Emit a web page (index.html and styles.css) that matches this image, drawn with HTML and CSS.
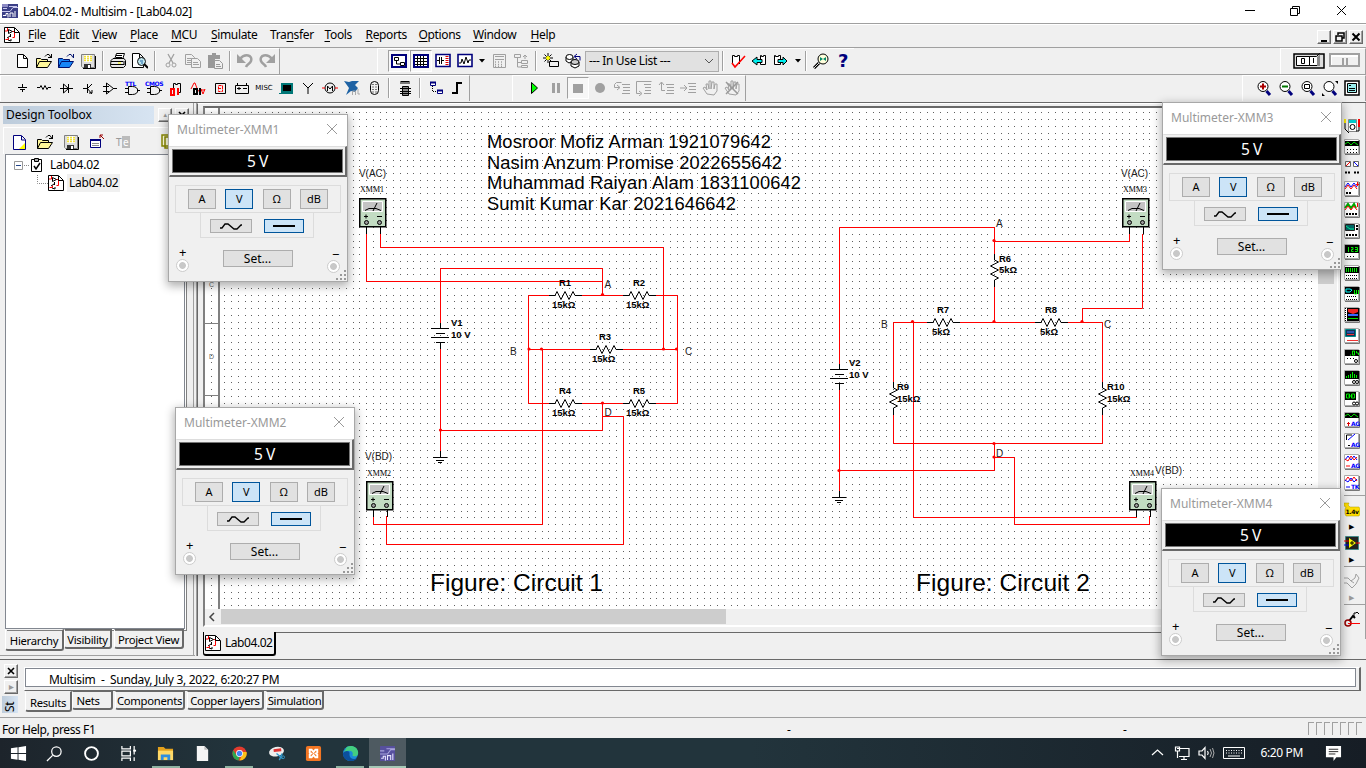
FILE: index.html
```html
<!DOCTYPE html>
<html lang="en">
<head>
<meta charset="utf-8">
<title>Lab04.02 - Multisim - [Lab04.02]</title>
<link rel="stylesheet" href="styles.css">
</head>
<body>
<svg class="defs" width="0" height="0">
<defs>
<pattern id="gridL" x="224" y="112" width="27" height="27" patternUnits="userSpaceOnUse"><path class="dots" d="M0 .5h1M7 .5h1M14 .5h1M21 .5h1M0 7.5h1M7 7.5h1M14 7.5h1M21 7.5h1M0 14.5h1M7 14.5h1M14 14.5h1M21 14.5h1M0 21.5h1M7 21.5h1M14 21.5h1M21 21.5h1"/></pattern>
<pattern id="gridR" x="1203" y="112" width="27" height="27" patternUnits="userSpaceOnUse"><path class="dots" d="M0 .5h1M7 .5h1M14 .5h1M21 .5h1M0 7.5h1M7 7.5h1M14 7.5h1M21 7.5h1M0 14.5h1M7 14.5h1M14 14.5h1M21 14.5h1M0 21.5h1M7 21.5h1M14 21.5h1M21 21.5h1"/></pattern>
<symbol id="logo" viewBox="0 0 16 16"><path fill="#3b3f86" d="M0 1h16v14H0z"/><path fill="#8d8bc4" d="M0 1h6v3H0z"/><path stroke="#c9c8ec" fill="none" d="M0 8.5h8l3-4h5M7 3.500h8M1 5.500h4"/><path stroke="#fff" fill="none" d="M1 12.500h3v-2h2v4M8 14v-4h3v4M13 14V8"/></symbol>
<symbol id="doc" viewBox="0 0 16 16"><path fill="#fff" stroke="#000" d="M.5.5h10l5 5v10H.5z"/><path fill="none" stroke="#f00" d="M3.500 1v3H1M8.500 4.500h2v6h-2M1.500 12.500h3v-2"/><path fill="none" stroke="#000" d="M10.500 1v4.500H15M4.500 2.500l4 2-4 2zM6.500 7v3M3 11l3-2M4 13l3 1v-2"/></symbol>
<symbol id="new" viewBox="0 0 16 16"><path fill="#fff" stroke="#000" d="M3.500 1.500h6l4 4v9h-10zM9.500 2v3.500H13"/></symbol>
<symbol id="newy" viewBox="0 0 16 16"><path fill="#fff" stroke="#00007c" d="M2.500 1.500h8l4 4v10h-12zM10.500 2v4H14"/><path fill="#ff0" d="M14 9v6H8z"/></symbol>
<symbol id="open" viewBox="0 0 16 16"><path fill="#fff799" stroke="#000" d="M.5 14.500v-9h4l1 1h6v2M.5 14.500l3-6h12l-4 6z"/><path fill="none" stroke="#000" d="M9 3.500l2-2h2l2 3M15.500 1v4M12 4.500h3"/></symbol>
<symbol id="openb" viewBox="0 0 16 16"><path fill="#1686f8" stroke="#00106c" d="M.5 14.500v-9h4l1 1h6v2M.5 14.500l3-6h12l-4 6z"/><path fill="none" stroke="#00106c" d="M9 3.500l2-2h2l2 3M15.500 1v4"/></symbol>
<symbol id="save" viewBox="0 0 16 16"><path fill="#ddd" stroke="#808080" d="M1.500 1.500h13v13h-12l-1-1z"/><path fill="#fff" d="M4 2h8v7H4z"/><path stroke="#f2e23c" stroke-width="1.500" d="M4 3.500h8M4 5.500h8M4 7.500h8" stroke-dasharray="2 1"/><path fill="#333" d="M4 11h7v4H4z"/><path fill="#fff" d="M8 12h2v3H8z"/><path stroke="#000" d="M15.500 3v12.500H3" fill="none"/></symbol>
<symbol id="print" viewBox="0 0 16 16"><path fill="#fff" stroke="#000" d="M4.500 6.500l2-6h8l-2 6z"/><path fill="#e8e8e8" stroke="#000" d="M1 7.500l2-2h11l1.500 2v5l-2 2h-12l-1-2z"/><path stroke="#000" d="M6 2.500h6M6 4.500h6M1 8.500h12M1 11.500h13M3 14.500h10M14 8v4"/><path stroke="#ff0" d="M8 10h3"/></symbol>
<symbol id="preview" viewBox="0 0 16 16"><path fill="#fff" stroke="#000" d="M.5.5h7l4 4v10H.5zM7.500 1v4H11"/><circle cx="9.500" cy="8.500" r="4" fill="#bde5ee" stroke="#111"/><path stroke="#26a" stroke-width="1" d="M8 8h3M9 10h2"/><path stroke="#000" stroke-width="2" d="M12 11l4 4"/></symbol>
<symbol id="cut" viewBox="0 0 16 16"><path fill="none" stroke="#a0a0a0" stroke-width="1.300" d="M5 1l5 9M11 1L6 10"/><circle cx="5" cy="12" r="2" class="gl"/><circle cx="11" cy="12" r="2" class="gl"/></symbol>
<symbol id="copy" viewBox="0 0 16 16"><path class="gl" d="M.5 1.500h6l3 3v7h-9zM2 5.500h5M2 7.500h5M2 9.500h4"/><path fill="#f0f0f0" stroke="#a0a0a0" d="M6.500 5.500h6l3 3v6h-9zM8 9.500h5M8 11.500h6"/></symbol>
<symbol id="paste" viewBox="0 0 16 16"><path fill="#999" d="M1 2h4V0h4v2h4v4h-5v9H1z"/><path fill="#f0f0f0" stroke="#999" d="M7.500 7.500h5l3 3v5h-8zM9 11.500h4M9 13.500h5"/></symbol>
<symbol id="undo" viewBox="0 0 16 16"><path fill="none" stroke="#a0a0a0" stroke-width="2.500" d="M3 6c5-6 13-4 11 2-1 3-4 3-5 6"/><path fill="#a0a0a0" d="M0 1v9h9z"/></symbol>
<symbol id="redo" viewBox="0 0 16 16"><path fill="none" stroke="#a0a0a0" stroke-width="2.500" d="M13 6C8 0 0 2 2 8c1 3 4 3 5 6"/><path fill="#a0a0a0" d="M16 1v9H7z"/></symbol>
<symbol id="win1" viewBox="0 0 16 16"><path fill="#fff" stroke="#00007c" stroke-width="2" d="M1 2h14v12H1z"/><path fill="none" stroke="#000" d="M3.500 4.500h4v3h-4zM9.500 9.500h4v3h-4zM5.500 8v3H9"/></symbol>
<symbol id="win2" viewBox="0 0 16 16"><path fill="#fff" stroke="#00007c" stroke-width="2" d="M1 2h14v12H1z"/><path stroke="#000" d="M2 5.500h12M2 8.500h12M2 11.500h12M4.500 3v10M7.500 3v10M10.500 3v10"/></symbol>
<symbol id="win3" viewBox="0 0 16 16"><path fill="#fff" stroke="#00007c" stroke-width="1.600" d="M1 1.500h14v12H1z"/><path stroke="#000" d="M2 7.500h2M4.500 4v7M6.500 4v7M7 7.500h2"/><path stroke="#d00" stroke-width="3" stroke-dasharray="1 1" d="M12 3v10"/></symbol>
<symbol id="win4" viewBox="0 0 16 16"><path fill="#fff" stroke="#00007c" stroke-width="1.600" d="M1 1.500h14v12H1z"/><path stroke="#000" fill="none" d="M2 10h2l1-4 2 5 2-7 2 6 1-3h2"/></symbol>
<symbol id="down" viewBox="0 0 8 8"><path d="M1 2h6L4 5.500z"/></symbol>
<symbol id="calc" viewBox="0 0 16 16"><path class="gl" d="M2.500 1.500h12v13h-12zM4 3.500h9M4 6.500h9"/><path stroke="#a0a0a0" stroke-dasharray="1 2" stroke-width="1.500" d="M4 9h9M4 11.500h9M4 13.500h9"/></symbol>
<symbol id="hier" viewBox="0 0 16 16"><path class="gl" d="M1.500 1.500h6v3h-6zM8.500 7.500h6v3h-6zM8.500 12.500h6v2h-6zM4.500 5v9H8M5 9.500h3M12 6V2M10 4l2-2 2 2"/></symbol>
<symbol id="star" viewBox="0 0 16 16"><path fill="none" stroke="#000" d="M6.500 8.500h9v5h-9z"/><path stroke="#000" d="M5 0v10M0 5h10M1.500 1.500l7 7M8.500 1.500l-7 7"/><circle cx="5" cy="5" r="2" fill="#ff0"/></symbol>
<symbol id="db" viewBox="0 0 16 16"><path fill="#fff" stroke="#000" d="M1 4v4l3 2 4-2V4M6 9v4l4 2 4-2V9"/><ellipse cx="4.500" cy="4" rx="3.500" ry="2.500" fill="#fff" stroke="#000"/><ellipse cx="10" cy="9" rx="4" ry="2.500" fill="#ccc" stroke="#000"/><path stroke="#00007c" fill="none" d="M10 3.500h5v4M12 1l-3 2.500L12 6"/></symbol>
<symbol id="check" viewBox="0 0 16 16"><path fill="#fff" stroke="#000" d="M2.500 11V2.500h2v1h3v-1h2V11"/><path fill="none" stroke="#f00" stroke-width="1.600" d="M2 10l3 4L15 3"/></symbol>
<symbol id="al" viewBox="0 0 16 16"><path fill="#fff" stroke="#000" d="M8.500 2.500h1v1h2v-1h2v9h-5z"/><path fill="#0ee" stroke="#000" d="M0 8l5-4v2.500h5v3H5V12z"/></symbol>
<symbol id="ar" viewBox="0 0 16 16"><path fill="#fff" stroke="#000" d="M.5 2.500h1v1h3v-1h2v9h-6z"/><path fill="#0ee" stroke="#000" d="M13 8L9 4v2.500H4v3h5V12z"/></symbol>
<symbol id="find" viewBox="0 0 16 16"><circle cx="10" cy="6" r="5" fill="#ffd" stroke="#000"/><path fill="#086" d="M7 4l3 2 3-2v4l-3-2-3 2z"/><path stroke="#000" stroke-width="3" d="M6 10l-5 5"/><path stroke="#ddd" d="M6 10l-5 5"/></symbol>
<symbol id="gndi" viewBox="0 0 16 16"><path stroke="#000" d="M8.500 4v3M4 7.500h9M6 9.500h5M8.500 10v2"/></symbol>
<symbol id="resi" viewBox="0 0 16 16"><path fill="none" stroke="#000" d="M1 8h3l1-2 2 4 2-4 2 4 1-2h3" transform="translate(0 -.5)"/></symbol>
<symbol id="dio" viewBox="0 0 16 16"><path fill="none" stroke="#000" d="M2 8.500h13M5.500 4v9l5-4.500zM10.500 4v9"/></symbol>
<symbol id="tran" viewBox="0 0 16 16"><path fill="none" stroke="#000" d="M3 8.500h4M7.500 4v9M7 9l5-5M7 8l5 6M9 13h3v-3"/></symbol>
<symbol id="opa" viewBox="0 0 16 16"><path fill="none" stroke="#000" d="M4.500 3v11l7-5.500zM1 6.500h6M1 11.500h6M11 8.500h4"/></symbol>
<symbol id="gate" viewBox="0 0 16 16"><path fill="none" stroke="#000" d="M4.500 6.500h4c7 0 7 8 0 8h-4zM1 8.500h3M1 12.500h3M13 10.500h3"/></symbol>
<symbol id="mcui" viewBox="0 0 16 16"><path fill="#888" stroke="#000" d="M5.500 6.500h6v9h-6z"/><path stroke="#000" d="M3 8.500h11M3 11.500h11M3 13.500h11M4 1v3M6 1v3M8 1v3M10 1v3M12 1v3M4 1.500h8"/></symbol>
<symbol id="step1" viewBox="0 0 16 16"><path class="gl" d="M8 4.500h8M9 7.500h7M9 10.500h7M8 13.500h8M7.500 2.500h-5l-2 2v3h5M3 5l3 2.500L3 10"/></symbol>
<symbol id="step2" viewBox="0 0 16 16"><path class="gl" d="M8 4.500h7M9 7.500h6M9 10.500h6M8 13.500h7M15.500 1.500H.5v12h4M3 11l3 2.500L3 16"/></symbol>
<symbol id="step3" viewBox="0 0 16 16"><path class="gl" d="M8 4.500h8M9 7.500h7M9 10.500h7M8 13.500h8M7 10.500H3.500v-8M1 5l2.500-3L6 5"/></symbol>
<symbol id="step4" viewBox="0 0 16 16"><path class="gl" d="M8 3.500h8M9 6.500h7M9 9.500h7M8 12.500h8M0 8h6M4 5l3 3-3 3"/></symbol>
<symbol id="hand" viewBox="0 0 16 16"><path class="gl" d="M5 14L1 8l2-1 2 3-1-6h2l1 5V1h2v8l1-7h2v7l1-5h2v7l-3 4z"/></symbol>
<symbol id="mag" viewBox="0 0 16 16"><circle cx="7" cy="6.500" r="5" fill="#fff" stroke="#000"/><path stroke="#00007c" stroke-width="3" d="M10.500 11l3.500 4"/></symbol>
<symbol id="zig" viewBox="0 0 33 10"><path class="k" d="M0 5.500h6l2-4 4 8 4-8 4 8 4-8 2 4h7"/></symbol>
<symbol id="meter" viewBox="0 0 28 37"><path class="k" d="M7.500 28v8M21.500 28v8"/><path fill="#c3dcc3" stroke="#000" stroke-width="1.500" d="M.75.75h26v28h-26z"/><path fill="#c4c4c4" stroke="#fff" d="M3.500 3.500h20v10h-20z"/><path class="k" d="M6 12.500l4-2h7l5 2M14 13l4-8M5 18.500h4M7 16.500v4M18 18.500h5"/><circle cx="7.500" cy="24.500" r="2" fill="#999" stroke="#000"/><circle cx="20.500" cy="24.500" r="2" fill="#999" stroke="#000"/></symbol>
<symbol id="batt" viewBox="0 0 20 26"><path class="k" d="M10.500 0v5M1 5.500h18M6 10.500h9M1 14.500h18M6 19.500h9M10.500 19v7"/></symbol>
<symbol id="gnd" viewBox="0 0 16 12"><path class="k" d="M8.500 0v6M1 6.500h14M4 9.500h8M6 11.500h4"/></symbol>
<symbol id="sine" viewBox="0 0 22 9"><path fill="none" stroke="#000" stroke-width="1.300" d="M0 6h2l3-4h3l6 5h3l4-4h1"/></symbol>
<symbol id="x" viewBox="0 0 10 10"><path fill="none" stroke="currentColor" d="M0 0l10 10M10 0L0 10"/></symbol>
<symbol id="ibox" viewBox="0 0 16 16"><path fill="#fff" stroke="#aaa" d="M.5.5h14v14H.5z"/><path stroke="#777" d="M15.500 1v14.500H1" fill="none"/></symbol>
</defs></svg>

<header class="title"><svg class="i16"><use href="#logo"/></svg><span>Lab04.02 - Multisim - [Lab04.02]</span>
<svg class="winbtns" viewBox="0 0 110 16"><path fill="none" stroke="#000" d="M0 7.500h10M45.500 5.500h7v7h-7zM47.500 5.500v-2h7v7h-2M92 3l9 9M101 3l-9 9"/></svg></header>

<nav class="menu"><svg class="i16"><use href="#doc"/></svg>
<span class="mi w31"><u>F</u>ile</span><span class="mi w33"><u>E</u>dit</span><span class="mi w38"><u>V</u>iew</span><span class="mi w41"><u>P</u>lace</span><span class="mi w40"><u>M</u>CU</span><span class="mi w59"><u>S</u>imulate</span><span class="mi w55">Tra<u>n</u>sfer</span><span class="mi w41"><u>T</u>ools</span><span class="mi w53"><u>R</u>eports</span><span class="mi w55"><u>O</u>ptions</span><span class="mi w57"><u>W</u>indow</span><span class="mi w31"><u>H</u>elp</span>
<div class="mdibtns"><b class="raised"><svg viewBox="0 0 12 12"><path stroke="#000" stroke-width="2" d="M3 10h6"/></svg></b><b class="raised"><svg viewBox="0 0 12 12"><path fill="none" stroke="#000" stroke-width="1.500" d="M4 4V2h6v5H8M2 5h6v5H2z"/></svg></b><b class="raised"><svg viewBox="0 0 12 12"><path stroke="#000" stroke-width="2" d="M2.500 2.500l7 7M9.500 2.500l-7 7"/></svg></b></div></nav>

<div class="bar">
<div class="seg s1"><i class="c"><svg><use href="#new"/></svg></i><i class="c"><svg><use href="#open"/></svg></i><i class="c"><svg><use href="#openb"/></svg></i><i class="c"><svg><use href="#save"/></svg></i><i class="sep"></i><i class="c"><svg><use href="#print"/></svg></i><i class="c"><svg><use href="#preview"/></svg></i><i class="sep wide"></i><i class="c"><svg><use href="#cut"/></svg></i><i class="c"><svg><use href="#copy"/></svg></i><i class="c"><svg><use href="#paste"/></svg></i><i class="sep"></i><i class="c"><svg><use href="#undo"/></svg></i><i class="c"><svg><use href="#redo"/></svg></i></div>
<div class="seg s2"><i class="c on"><svg><use href="#win1"/></svg></i><i class="c on"><svg><use href="#win2"/></svg></i><i class="c"><svg><use href="#win3"/></svg></i><i class="c"><svg><use href="#win4"/></svg></i><i class="arr"><svg><use href="#down"/></svg></i><i class="c"><svg><use href="#calc"/></svg></i><i class="c"><svg><use href="#hier"/></svg></i><i class="sep"></i><i class="c"><svg><use href="#star"/></svg></i><i class="c"><svg><use href="#db"/></svg></i>
<div class="combo"><span>--- In Use List ---</span><svg viewBox="0 0 10 6"><path fill="none" stroke="#555" d="M1 1l4 4 4-4"/></svg></div>
<i class="sep"></i><i class="c"><svg><use href="#check"/></svg></i><i class="c"><svg><use href="#al"/></svg></i><i class="c"><svg><use href="#ar"/></svg></i><i class="arr n"><svg><use href="#down"/></svg></i><i class="sep"></i><i class="c"><svg><use href="#find"/></svg></i><i class="c q">?</i></div>
<div class="seg s3"><svg class="sw" viewBox="0 0 67 16"><path fill="#ddd" stroke="#000" stroke-width="1.500" d="M1 1h30v14H1z"/><path fill="#fff" stroke="#000" d="M3.500 3.500h13v9h-13zM16.500 3.500h7l3-3v12h-10z"/><path fill="#888" d="M24 4l3-3v12h-3z"/><path fill="none" stroke="#000" d="M8.500 5.500h3v5h-3zM20.500 5v5"/><path fill="#fff" stroke="#a0a0a0" stroke-width="2" d="M37 1h29v12H37z"/><path fill="#f0f0f0" d="M39 4h26v8H39z"/><path stroke="#a0a0a0" stroke-width="2" d="M50 5v7M54 5v7"/></svg></div>
</div>

<div class="bar b2">
<div class="seg r1"><i class="c"><svg><use href="#gndi"/></svg></i><i class="c"><svg><use href="#resi"/></svg></i><i class="c"><svg><use href="#dio"/></svg></i><i class="c"><svg><use href="#tran"/></svg></i><i class="c"><svg><use href="#opa"/></svg></i><i class="c"><svg><use href="#gate"/><text x="1" y="6" class="tiny blue">TTL</text></svg></i><i class="c"><svg><use href="#gate"/><text x="-1" y="6" class="tiny blue">CMOS</text></svg></i><i class="c"><svg viewBox="0 0 16 16"><path fill="none" stroke="#000" d="M5.500 8V3.500h2v1h2v-1h3v9H9"/><path fill="none" stroke="#f00" stroke-width="2" d="M3 9h3v6H3zM10 8v7"/></svg></i><i class="c"><svg viewBox="0 0 16 16"><path fill="none" stroke="#f00" d="M1 9l3-6h1l3 8 3-1h4M11 9l2 5 2-5"/><path fill="none" stroke="#000" stroke-width="2" d="M4 9h3v5H4zM10 8v7"/></svg></i><i class="c"><svg viewBox="0 0 16 16"><path fill="none" stroke="#000" d="M3.500 3.500h10v10h-10z"/><path fill="none" stroke="#f00" stroke-dasharray="3 1" d="M6.500 5.500h4v6h-4zM6 8.500h5"/></svg></i><i class="c"><svg viewBox="0 0 16 16"><path fill="none" stroke="#000" d="M1.500 5.500h13v8h-13zM3.500 3v2M12.500 3v2M3 8.500h4M5 7v3M9 8.500h4"/></svg></i><i class="c"><span class="misc">MISC</span></i><i class="c"><svg viewBox="0 0 16 16"><path fill="#077" d="M3 3h12v10H3zM1 13h14v1H1z"/><path d="M5 5h8v6H5z"/></svg></i><i class="c"><svg viewBox="0 0 16 16"><path fill="none" stroke="#000" d="M8 14V8L3 3M8 8l5-5"/></svg></i><i class="c"><svg viewBox="0 0 16 16"><circle cx="8" cy="8" r="5" fill="none" stroke="#000"/><path fill="none" stroke="#000" d="M5.500 11V6L8 9l2.500-3v5"/><path stroke="#f00" d="M0 8h3M13 8h3"/></svg></i><i class="c"><svg viewBox="0 0 16 16"><path fill="#1d62a4" d="M0 1l5 1 3-1h7l-4 4 3 3-3 4-4-1-5 4 3-7z"/><path stroke="#aaa" fill="none" d="M8.500 15v-4h3v4M14 9v5h2"/></svg></i><i class="c"><svg viewBox="0 0 16 16"><rect x="4.500" y="1.500" width="8" height="13" rx="4" fill="none" stroke="#000"/><path stroke="#000" stroke-dasharray="1 1.500" d="M7 4v9M10 4v9"/></svg></i><i class="sep"></i><i class="c"><svg><use href="#mcui"/></svg></i><i class="sep"></i><i class="c"><svg viewBox="0 0 16 16"><path fill="#fff" stroke="#00007c" d="M2.500 2.500h5v3h-5zM9.500 10.500h5v3h-5z"/><path stroke="#00007c" stroke-width="2" d="M2 2.500h6M9 10.500h6"/><path fill="none" stroke="#000" stroke-dasharray="1 1" d="M4.500 6v5.500H9"/></svg></i><i class="c"><svg viewBox="0 0 16 16"><path fill="none" stroke="#000" stroke-width="2" d="M2 13h5V3h5"/></svg></i></div>
<div class="seg r2"><i class="c"><svg viewBox="0 0 16 16"><path fill="#0f0" stroke="#000" d="M5.500 2.500v11l6-5.500z"/></svg></i><i class="c"><svg viewBox="0 0 16 16"><path fill="#a0a0a0" d="M4 3h3v10H4zM9 3h3v10H9z"/></svg></i><i class="c on"><svg viewBox="0 0 16 16"><path fill="#a0a0a0" d="M3 4h10v9H3z"/></svg></i><i class="c"><svg viewBox="0 0 16 16"><circle cx="8" cy="8" r="5" fill="#a0a0a0"/></svg></i><i class="c"><svg><use href="#step1"/></svg></i><i class="c"><svg><use href="#step2"/></svg></i><i class="c"><svg><use href="#step3"/></svg></i><i class="c"><svg><use href="#step4"/></svg></i><i class="c"><svg><use href="#hand"/></svg></i><i class="c"><svg viewBox="0 0 16 16"><use href="#hand"/><path stroke="#999" stroke-width="1.500" d="M2 2l12 12M14 2L2 14"/></svg></i></div>
<div class="seg r3"><i class="c"><svg viewBox="0 0 16 16"><use href="#mag"/><path stroke="#a00" stroke-width="2" d="M4 6.500h6M7 3.500v6"/></svg></i><i class="c"><svg viewBox="0 0 16 16"><use href="#mag"/><path stroke="#070" stroke-width="2" d="M4 6.500h6"/></svg></i><i class="c"><svg viewBox="0 0 16 16"><use href="#mag"/><path fill="none" stroke="#000" d="M4.500 4.500h5v4h-5z"/></svg></i><i class="c"><svg viewBox="0 0 16 16"><use href="#mag"/><path fill="#000" d="M13 1h3v3zM0 13v3h3z"/></svg></i><i class="c"><svg viewBox="0 0 16 16"><path fill="#fff" stroke="#000" stroke-width="1.500" d="M1 1h14v14H1z"/><path fill="#9ee" stroke="#000" d="M3.500 3.500h9v9h-9z"/><path stroke="#000" d="M5 5.500h2M5 8.500h6M5 10.500h6"/></svg></i></div>
</div>

<main class="work">
<aside class="toolbox">
 <div class="tbhead"><span>Design Toolbox</span><b class="raised up">▲</b><b class="raised"><svg viewBox="0 0 12 12"><path stroke="#000" stroke-width="1.600" d="M3 3l6 6M9 3l-6 6"/></svg></b></div>
 <div class="tbicons"><svg><use href="#newy"/></svg><svg><use href="#open"/></svg><svg><use href="#save"/></svg><svg viewBox="0 0 16 16"><path fill="#fff" stroke="#00007c" d="M1.500 5.500h10v8h-10z"/><path stroke="#00007c" stroke-width="2" d="M1 6h11"/><path stroke="#888" d="M3 9.500h7M3 11.500h7"/><path fill="none" stroke="#900" d="M15 5l-4-4M11 4V1h3"/></svg><svg viewBox="0 0 16 16"><path fill="#bbb" d="M7 2h8v12H7z"/><text x="1" y="12" class="te">T</text><text x="8" y="12" class="te e">e</text></svg><svg class="last" viewBox="0 0 16 16"><path fill="#ffd" stroke="#880" stroke-width="1.500" d="M1 1h9v11H1zM4 3h9v11H4z"/></svg></div>
 <div class="tree">
  <div class="trow"><svg class="conn" viewBox="0 0 26 16"><path fill="#fff" stroke="#999" d="M.5 4.500h8v8h-8z"/><path stroke="#248" d="M2 8.500h5"/><path stroke="#888" stroke-dasharray="1 1" d="M10 8.500h6"/></svg><svg class="clip" viewBox="0 0 12 14"><path fill="#fff" stroke="#000" d="M.5 1.500h10v12H.500z"/><path fill="#aaa" stroke="#000" d="M3.500.5h4v3h-4z"/><path fill="none" stroke="#000" stroke-width="1.500" d="M3 8l2 3 4-6"/></svg><span>Lab04.02</span></div>
  <div class="trow two"><svg class="elbow" viewBox="0 0 11 16"><path fill="none" stroke="#888" stroke-dasharray="1 1" d="M.5 0v8.500H11"/></svg><svg class="i16"><use href="#doc"/></svg><span class="sel">Lab04.02</span></div>
 </div>
 <div class="tabs t1"><span class="tab act">Hierarchy</span><span class="tab">Visibility</span><span class="tab">Project View</span></div>
</aside>

<section class="mdi">
 <div class="view">
 <svg class="sheet" viewBox="205 108 1113 501">
 <rect x="205" y="108" width="550" height="498" fill="url(#gridL)"/><rect x="755" y="108" width="558" height="498" fill="url(#gridR)"/>
 <path fill="#fff" d="M212 108h6v501h-6z"/>
 <path fill="#808080" d="M218 108h2v501h-2z"/><path stroke="#808080" d="M205 179.500h13M205 251.500h13M205 323.500h13M205 395.500h13M205 467.500h13M205 539.500h13"/>
 <g class="rul"><text x="209" y="287">C</text><text x="209" y="359">D</text><text x="209" y="575">G</text></g>
 <g class="r">
 <path d="M366.500 234v47.500H603M380.500 234v13.500H663.500V349M440.500 323V268.500H602.500V295M440.500 349V452M549 295.500H528.500V403.500H549M582 295.500H623M656 295.500H677.500V403.500H656M582 403.500H623M528.500 349.500H590M623 349.500H677.500M542.500 349V524.500H373.500V516M602.500 403V430.500H440.500M602.500 416.500H623.500V544.500H386.500V516"/>
 <path d="M839.500 365V227.500H994.500V254M994.500 241.500H1129.500V234M1142.500 234V308.500H1082.500V322M994.500 287V322.500M928 322.500H893.500V382M960 322.500H1035M1068 322.500H1102.500V382M893.500 415V443.500H1102.500V415M994.500 443V470.500H839.500M839.500 389V491M994.500 457.500H1014.500V524.500H1149.500V516M913.500 322V517.500H1136.500V516"/>
 </g>
 <g class="node"><circle cx="602.500" cy="294.500" r="1.600"/><circle cx="529" cy="349" r="1.600"/><circle cx="541.500" cy="349" r="1.600"/><circle cx="663.500" cy="349" r="1.600"/><circle cx="676.500" cy="349" r="1.600"/><circle cx="602.500" cy="403" r="1.600"/><circle cx="440.500" cy="430" r="1.600"/><circle cx="994" cy="240.500" r="1.600"/><circle cx="994" cy="321.500" r="1.600"/><circle cx="912.500" cy="321.500" r="1.600"/><circle cx="1082" cy="321.500" r="1.600"/><circle cx="994" cy="443.500" r="1.600"/><circle cx="994" cy="457" r="1.600"/><circle cx="839" cy="470.500" r="1.600"/></g>
 <use href="#zig" x="549" y="290" width="33" height="10"/><use href="#zig" x="623" y="290" width="33" height="10"/><use href="#zig" x="590" y="344" width="33" height="10"/><use href="#zig" x="549" y="398" width="33" height="10"/><use href="#zig" x="623" y="398" width="33" height="10"/><use href="#zig" x="927" y="317" width="33" height="10"/><use href="#zig" x="1035" y="317" width="33" height="10"/>
 <use href="#zig" width="33" height="10" transform="translate(1000 254) rotate(90)"/><use href="#zig" width="33" height="10" transform="translate(899 382) rotate(90)"/><use href="#zig" width="33" height="10" transform="translate(1108 382) rotate(90)"/>
 <use href="#batt" x="430" y="323" width="20" height="26"/><use href="#batt" x="829" y="364" width="20" height="26"/>
 <use href="#gnd" x="432" y="451" width="16" height="12"/><use href="#gnd" x="831" y="491" width="16" height="12"/>
 <use href="#meter" x="359" y="198" width="28" height="37"/><use href="#meter" x="366" y="481" width="28" height="37"/><use href="#meter" x="1122" y="198" width="28" height="37"/><use href="#meter" x="1129" y="481" width="28" height="37"/>
 <g class="lb"><text x="559" y="286">R1</text><text x="633" y="286">R2</text><text x="599" y="340">R3</text><text x="559" y="394">R4</text><text x="633" y="394">R5</text><text x="451" y="326">V1</text><text x="451" y="338">10 V</text><text x="552" y="307.500">15kΩ</text><text x="626" y="307.500">15kΩ</text><text x="592" y="361.500">15kΩ</text><text x="552" y="415.500">15kΩ</text><text x="626" y="415.500">15kΩ</text>
 <text x="999" y="261.500">R6</text><text x="999" y="273">5kΩ</text><text x="937" y="313">R7</text><text x="932" y="335">5kΩ</text><text x="1045" y="313">R8</text><text x="1040" y="335">5kΩ</text><text x="849" y="366">V2</text><text x="849" y="378">10 V</text><text x="897" y="389.500">R9</text><text x="897" y="401.500">15kΩ</text><text x="1107" y="389.500">R10</text><text x="1107" y="401.500">15kΩ</text></g>
 <g class="nt"><text x="604.500" y="288">A</text><text x="510" y="355">B</text><text x="685" y="355">C</text><text x="604.500" y="416">D</text><text x="996" y="227">A</text><text x="881" y="328">B</text><text x="1104" y="328">C</text><text x="996" y="457">D</text><text x="359" y="177" textLength="27">V(AC)</text><text x="1121" y="177" textLength="27">V(AC)</text><text x="365" y="460" textLength="27">V(BD)</text><text x="1155" y="474" textLength="27">V(BD)</text></g>
 <g class="xm"><text x="360" y="192" textLength="24">XMM1</text><text x="367" y="476" textLength="24">XMM2</text><text x="1123" y="192" textLength="24">XMM3</text><text x="1130" y="476" textLength="24">XMM4</text></g>
 <g class="names"><text x="487" y="148" textLength="284">Mosroor Mofiz Arman 1921079642</text><text x="487" y="168.500" textLength="295">Nasim Anzum Promise 2022655642</text><text x="487" y="189" textLength="314">Muhammad Raiyan Alam 1831100642</text><text x="487" y="210" textLength="249">Sumit Kumar Kar 2021646642</text></g>
 <g class="fig"><text x="430" y="591" textLength="173">Figure: Circuit 1</text><text x="916" y="591" textLength="174">Figure: Circuit 2</text></g>
 </svg>
 <div class="vscroll"><i></i></div>
 </div>
 <div class="hscroll"><svg viewBox="0 0 16 16"><path fill="none" stroke="#444" stroke-width="1.500" d="M9 4L5 8l4 4"/></svg><i></i></div>
 <div class="mditabs"><div class="doctab"><svg class="i16"><use href="#doc"/></svg><span>Lab04.02</span></div></div>
</section>

<aside class="instr">
 <i><svg viewBox="0 0 16 16"><path fill="#fff" stroke="#888" d="M4.500 1.500h8v12h-8z"/><path fill="#0cc" d="M5 2h7v3H5z"/><circle cx="8.500" cy="9" r="2.500" fill="none" stroke="#000"/><path stroke="#fe0" stroke-width="2" d="M1 1v4"/><path stroke="#f00" stroke-width="2" d="M15 1v8"/><path stroke="#000" fill="none" d="M1 5v6l4 4M15 9v4h-3"/></svg></i>
 <i><svg viewBox="0 0 16 16"><use href="#ibox"/><path d="M1 2h14v5H1z"/><path fill="none" stroke="#0d0" d="M1 5l3-2 3 3 3-3 4 3"/><path stroke="#000" stroke-dasharray="1 2" d="M3 10.500h10M3 13.500h10"/></svg></i>
 <i><svg viewBox="0 0 16 16"><path fill="#fff" stroke="#666" d="M1.500 1.500h5v5h-5zM9.500 1.500h5v5h-5z"/><path stroke="#f00" d="M2 6l4-4"/><path stroke="#00f" d="M10 2l4 4"/><path stroke="#000" stroke-width="2" stroke-dasharray="2 1" d="M1 12.500h6M10 12.500h6"/></svg></i>
 <i><svg viewBox="0 0 16 16"><use href="#ibox"/><path fill="none" stroke="#00f" d="M1 6l3-4 3 4 3-4 3 4"/><path fill="none" stroke="#f00" d="M1 8l3-4 3 4 3-4 3 4M13.500 1v4M12 3.500h3"/><path stroke="#000" stroke-width="2" stroke-dasharray="2 1" d="M2 12h6"/></svg></i>
 <i><svg viewBox="0 0 16 16"><use href="#ibox"/><path fill="none" stroke="#0a0" stroke-width="2" d="M1 6l3-4 3 4 3-4 2 4"/><path fill="none" stroke="#f00" d="M1 8l3-4 3 4 3-4 3 4M13.500 1v4"/><path stroke="#000" stroke-width="2" stroke-dasharray="2 1" d="M2 12h12"/></svg></i>
 <i><svg viewBox="0 0 16 16"><use href="#ibox"/><path fill="#066" stroke="#222" d="M1.500 1.500h9v6h-9z"/><path fill="none" stroke="#0e9" d="M2 3l4 3h4"/><path stroke="#000" stroke-width="2" stroke-dasharray="2 1" d="M2 12h12M13 2v5"/></svg></i>
 <i><svg viewBox="0 0 16 16"><use href="#ibox"/><path d="M1 1h14v8H1z"/><path stroke="#0e0" fill="none" d="M4.500 3v5M7 3.500h2v2H7.500v2H9.500M11 3.500h2.500v4H11M11 5.500h2"/><path stroke="#000" stroke-dasharray="1 2" d="M3 12.500h9"/></svg></i>
 <i><svg viewBox="0 0 16 16"><use href="#ibox"/><path d="M1 2h14v6H1z"/><path stroke="#0e0" stroke-width="4" stroke-dasharray="1 1" d="M2 5h12"/><path stroke="#000" stroke-dasharray="1 1" d="M2 10.500h12M2 13.500h12"/></svg></i>
 <i><svg viewBox="0 0 16 16"><use href="#ibox"/><path d="M1 1h14v7H1z"/><path fill="none" stroke="#0ff" d="M2 3h4l2 1-2 2H2z"/><path stroke="#0e0" d="M10.500 4v4h2V4M14.500 4v4"/><path stroke="#000" stroke-dasharray="1 1" d="M3 10.500h10M2 13.500h12"/></svg></i>
 <i><svg viewBox="0 0 16 16"><use href="#ibox"/><path d="M3 1h12v13H3z"/><path fill="#e22" d="M4 2h10v3l-5 2-5-2z"/><path stroke="#36f" stroke-width="2" d="M4 8h10"/><path stroke="#0d0" d="M4 11.500h10"/><path stroke="#000" stroke-dasharray="1 1" d="M1.500 1v13"/></svg></i>
 <i><svg viewBox="0 0 16 16"><use href="#ibox"/><path fill="#135" stroke="#088" d="M1.500 1.500h10v7h-10z"/><path stroke="#e33" d="M3 6.500h7M3 12.500h11"/><path stroke="#47f" d="M3 4h7"/></svg></i>
 <i><svg viewBox="0 0 16 16"><use href="#ibox"/><path d="M1 1h14v6H1z"/><path fill="none" stroke="#0e0" d="M6 6h1M8.500 2v4h2V2zM12.500 2v2h2v2"/><circle cx="12" cy="12" r="1.500" fill="#fff" stroke="#000"/><path stroke="#000" stroke-dasharray="1 2" d="M3 9.500h7"/></svg></i>
 <i><svg viewBox="0 0 16 16"><use href="#ibox"/><path d="M1 1h14v8H1z"/><path stroke="#0e0" d="M2.500 6v2M4.500 5v3M6.500 4v4M8.500 2v6M10.500 4v4M12.500 5v3"/><circle cx="10" cy="12" r="1.500" fill="#fff" stroke="#000"/><circle cx="13" cy="12" r="1.500" fill="#fff" stroke="#000"/></svg></i>
 <i><svg viewBox="0 0 16 16"><use href="#ibox"/><path d="M1 1h11v8H1z"/><path fill="none" stroke="#0e0" d="M2.500 3v4h3V3zM7.500 3v4h3V3zM4 5h5"/><circle cx="10" cy="12.500" r="1.500" fill="#fff" stroke="#000"/><circle cx="13" cy="12.500" r="1.500" fill="#fff" stroke="#000"/></svg></i>
 <i><svg viewBox="0 0 16 16"><use href="#ibox"/><path d="M1 1h14v5H1z"/><path fill="none" stroke="#0d0" d="M1 4l3-2 3 3 3-3 4 3"/><path stroke="#d00" d="M3 11.500h3M4.500 10v4"/><text x="7" y="14" class="tiny blue">AG</text></svg></i>
 <i><svg viewBox="0 0 16 16"><use href="#ibox"/><path fill="none" stroke="#000" d="M2.500 7V2H8M4 12.500h2"/><path stroke="#00f" d="M4 7l7-6"/><text x="7" y="14" class="tiny blue">AG</text></svg></i>
 <i><svg viewBox="0 0 16 16"><use href="#ibox"/><path fill="none" stroke="#00f" d="M1 6l3-4 3 4 3-4 3 4"/><path fill="none" stroke="#f00" d="M1 5l3 2 3-5 3 4 3-3M2 12h4"/><text x="7" y="14" class="tiny blue">AG</text></svg></i>
 <i><svg viewBox="0 0 16 16"><use href="#ibox"/><path fill="none" stroke="#f00" d="M1 6l3-4 3 4 3-4 3 4"/><path fill="none" stroke="#00f" d="M1 5l3 2 3-4 3 4 3-3M2 12h4"/><text x="7" y="14" class="tiny blue">TK</text></svg></i>
 <hr>
 <i class="tall"><svg viewBox="0 0 16 16"><path fill="#fd0" stroke="#a90" stroke-width=".5" d="M0 1h5l-1 2 2 2h9l1 2v5l-1 2H2l-1-2V7l1-2-2-1z"/><text x="1.500" y="12" class="tiny">1.4v</text></svg></i>
 <i class="pt">▶</i>
 <i class="tall"><svg viewBox="0 0 16 16"><path fill="#222" stroke="#088" stroke-dasharray="1 1" d="M1.500 1.500h13v13h-13z"/><path fill="#ff0" d="M5 3v10l7-5z"/><path stroke="#f00" d="M0 6h5M12 8h4"/><path stroke="#00f" d="M0 10h5"/><path stroke="#000" d="M6 8h4M8 6v4"/></svg></i>
 <i class="pt">▶</i>
 <hr>
 <i class="tall"><svg viewBox="0 0 16 16"><path class="gl" d="M0 5h4l3 3 4-3 1-4 3 4-3 6-4 4-5-5H0M7 8l3 2"/></svg></i>
 <i class="pt dim">▶</i>
 <hr>
 <i class="tall"><svg viewBox="0 0 16 16"><path stroke="#000" stroke-width="2" fill="none" d="M5 10l4-5 2 2"/><path stroke="#000" fill="none" d="M10 6V2h2l1-1 2 2"/><circle cx="4" cy="12" r="3" fill="none" stroke="#900" stroke-width="1.500"/><path stroke="#f00" d="M4 12.500h12"/></svg></i>
</aside>
</main>

<section class="results">
 <div class="rside"><b class="raised"><svg viewBox="0 0 12 12"><path stroke="#000" stroke-width="1.600" d="M3 3l6 6M9 3l-6 6"/></svg></b><b class="raised up">▶</b><span><em>St</em></span></div>
 <div class="rmain"><div class="rbox"><p>Multisim&nbsp; -&nbsp; Sunday, July 3, 2022, 6:20:27 PM</p></div>
 <div class="tabs t2"><span class="tab act">Results</span><span class="tab">Nets</span><span class="tab">Components</span><span class="tab">Copper layers</span><span class="tab">Simulation</span></div></div>
</section>
<footer class="status"><span>For Help, press F1</span><span class="d1">-</span><span class="d2">-</span><span class="cells"><i></i><i></i><i></i><i></i><i></i><i></i><i></i></span></footer>

<div class="taskbar">
 <i><svg viewBox="0 0 18 18"><path fill="#fff" d="M1 3.500l7-1V8.500H1zM9 2.300l8-1.300v7.500H9zM1 9.500h7v6l-7-1zM9 9.500h8V17l-8-1.300z"/></svg></i>
 <i><svg viewBox="0 0 18 18"><circle cx="11" cy="7" r="5" fill="none" stroke="#fff" stroke-width="1.300"/><path stroke="#fff" stroke-width="1.300" d="M7 11l-6 6"/></svg></i>
 <i><svg viewBox="0 0 18 18"><circle cx="9" cy="9" r="6.800" fill="none" stroke="#fff" stroke-width="2"/></svg></i>
 <i><svg viewBox="0 0 18 18"><path fill="none" stroke="#fff" stroke-width="1.300" d="M2 1v3h9V1M2 6.500h9v5H2zM2 17v-3h9v3M15 1v9M15 13v4"/><path fill="#fff" d="M14 5h3v2h-3z"/></svg></i>
 <i class="run fold"><svg viewBox="0 0 18 18"><path fill="#e4a11c" d="M1 2h6l2 2h8v12H1z"/><path fill="#ffd967" d="M1 6h16v10H1z"/><path fill="#2f8fe0" d="M4 10h10v6h-3v-3H7v3H4z"/></svg></i>
 <i><svg viewBox="0 0 18 18"><path fill="#f5f5f5" d="M3 1h8l4 4v12H3z"/><path fill="#bbb" d="M11 1l4 4h-4z"/></svg></i>
 <i class="run"><svg viewBox="0 0 18 18"><circle cx="9" cy="9" r="7.500" fill="#e33b2e"/><path fill="#fbc116" d="M16.500 7.500A7.500 7.500 0 0 1 9 16.500l3-6V7.500z"/><path fill="#2da94f" d="M2.500 5.500L6 11l3 1.500-1 4A7.500 7.500 0 0 1 2.500 5.500z"/><circle cx="9" cy="9" r="3.600" fill="#fff"/><circle cx="9" cy="9" r="2.800" fill="#4285f4"/></svg></i>
 <i><svg viewBox="0 0 18 18"><ellipse cx="9" cy="7" rx="8" ry="5" fill="#eee" transform="rotate(-12 9 7)"/><path stroke="#d33" stroke-width="3" d="M6 6l8-1"/><path stroke="#39c" stroke-width="1.500" fill="none" d="M9 9l6 5M15 9l-3 7"/><circle cx="16" cy="13" r="1.500" fill="none" stroke="#39c"/></svg></i>
 <i><svg viewBox="0 0 18 18"><rect x="1" y="1" width="16" height="16" rx="2" fill="#f37623"/><path fill="none" stroke="#fff" stroke-width="2" d="M5 5h2l2 2.500L11 5h2v3l-1.500 1 1.500 1v3h-2L9 10.500 7 13H5v-3l1.500-1L5 8z"/></svg></i>
 <i class="run"><svg viewBox="0 0 18 18"><circle cx="9" cy="9" r="8" fill="#1b8bd8"/><path fill="#43cf80" d="M5 2c6-3 13 1 12 7 0 3-4 4-6 2 2-4-3-7-9-3z"/><path fill="#0c4f9c" d="M1 9c1-3 7-4 7 0-1 5 4 7 8 5-3 5-15 4-15-5z"/></svg></i>
 <i class="run active"><svg viewBox="0 0 16 16"><path fill="#57509f" d="M1 1h14v14H1z"/><path stroke="#aaa5dd" fill="none" d="M1 8.500h7l3-4h4M7 3.500h8M1 5.500h4"/><path stroke="#e7e4ff" fill="none" d="M2 12.500h2v-2h2v4M8 14v-4h3v4M13 14V8"/></svg></i>
 <div class="tray"><svg class="ic1" viewBox="0 0 96 18"><path fill="none" stroke="#fff" stroke-width="1.200" d="M2 11l5.500-5L13 11M27 4.500h12v8H29M25.500 3h4v4h-4zM27.500 7v7M31 15.500h6M34 12v3M49 7h3l3-3.500v11L52 11h-3zM57.500 7q1.500 2 0 4"/><path fill="none" stroke="#aaa" d="M60 5q3 4 0 8M62.500 4q3 5 0 10"/><path fill="none" stroke="#fff" d="M73.500 3.500h21v11h-21z"/><path stroke="#fff" stroke-dasharray="1 1.500" d="M76 6.500h17M76 9h17"/><path stroke="#fff" d="M78 12h12"/></svg><span>6:20 PM</span><svg class="note" viewBox="0 0 18 18"><path fill="#fff" d="M1 1h16v12h-5l-3 4v-4H1z"/><path stroke="#222" d="M4 4.500h10M4 7h10M4 9.500h7"/></svg></div>
</div>

<div class="mm m1"><div class="mt"><span>Multimeter-XMM1</span><svg><use href="#x"/></svg></div><div class="lcd"><div>5 V</div></div><div class="g1"><b>A</b><b class="sel">V</b><b>Ω</b><b>dB</b></div><div class="g2"><b><svg><use href="#sine"/></svg></b><b class="sel dc"><hr></b></div><div class="g3"><div class="tm"><span>+</span><i></i></div><b>Set...</b><div class="tm neg"><span>−</span><i></i></div></div><svg class="grip" viewBox="0 0 10 10"><path fill="#999" d="M8 0h2v2H8zM4 4h2v2H4zM8 4h2v2H8zM0 8h2v2H0zM4 8h2v2H4zM8 8h2v2H8z"/></svg></div>
<div class="mm m2"><div class="mt"><span>Multimeter-XMM2</span><svg><use href="#x"/></svg></div><div class="lcd"><div>5 V</div></div><div class="g1"><b>A</b><b class="sel">V</b><b>Ω</b><b>dB</b></div><div class="g2"><b><svg><use href="#sine"/></svg></b><b class="sel dc"><hr></b></div><div class="g3"><div class="tm"><span>+</span><i></i></div><b>Set...</b><div class="tm neg"><span>−</span><i></i></div></div><svg class="grip" viewBox="0 0 10 10"><path fill="#999" d="M8 0h2v2H8zM4 4h2v2H4zM8 4h2v2H8zM0 8h2v2H0zM4 8h2v2H4zM8 8h2v2H8z"/></svg></div>
<div class="mm m3"><div class="mt"><span>Multimeter-XMM3</span><svg><use href="#x"/></svg></div><div class="lcd"><div>5 V</div></div><div class="g1"><b>A</b><b class="sel">V</b><b>Ω</b><b>dB</b></div><div class="g2"><b><svg><use href="#sine"/></svg></b><b class="sel dc"><hr></b></div><div class="g3"><div class="tm"><span>+</span><i></i></div><b>Set...</b><div class="tm neg"><span>−</span><i></i></div></div><svg class="grip" viewBox="0 0 10 10"><path fill="#999" d="M8 0h2v2H8zM4 4h2v2H4zM8 4h2v2H8zM0 8h2v2H0zM4 8h2v2H4zM8 8h2v2H8z"/></svg></div>
<div class="mm m4"><div class="mt"><span>Multimeter-XMM4</span><svg><use href="#x"/></svg></div><div class="lcd"><div>5 V</div></div><div class="g1"><b>A</b><b class="sel">V</b><b>Ω</b><b>dB</b></div><div class="g2"><b><svg><use href="#sine"/></svg></b><b class="sel dc"><hr></b></div><div class="g3"><div class="tm"><span>+</span><i></i></div><b>Set...</b><div class="tm neg"><span>−</span><i></i></div></div><svg class="grip" viewBox="0 0 10 10"><path fill="#999" d="M8 0h2v2H8zM4 4h2v2H4zM8 4h2v2H8zM0 8h2v2H0zM4 8h2v2H4zM8 8h2v2H8z"/></svg></div>
</body>
</html>
```
FILE: styles.css
```css
*{box-sizing:border-box}
body{margin:0;width:1366px;height:768px;overflow:hidden;position:relative;background:#f0f0f0;color:#000;font:12px/16px "Noto Sans","Open Sans",sans-serif;letter-spacing:-.35px;display:flex;flex-direction:column}
i,em{font-style:normal}
svg{display:block;flex:none}
.defs{position:absolute}
.i16{width:16px;height:16px}
.gl{fill:none;stroke:#a0a0a0}
.k{fill:none;stroke:#000;stroke-width:1}
.dots{stroke:#606060;stroke-width:1;shape-rendering:crispEdges}
.tiny{font:bold 6px "DejaVu Sans",sans-serif;letter-spacing:-.4px}
.blue{fill:#00f}

.title{height:23px;background:#fff;display:flex;align-items:center;padding:0 21px 0 2px;gap:5px;flex:none;letter-spacing:-.32px}
.title .winbtns{width:110px;height:16px;margin-left:auto;margin-right:-10px;margin-top:-2px}
.title .i16{margin-top:-1px}
.menu{height:24px;border-top:1px solid #a0a0a0;display:flex;align-items:center;padding:0 4px 2px;flex:none;box-shadow:inset 0 1px #fff}
.menu .i16{margin-right:8px}
.mi{flex:none;white-space:nowrap}
.mi u{text-decoration-thickness:1px;text-underline-offset:1.5px}
.w31{width:31px}.w33{width:33px}.w38{width:38px}.w41{width:41px}.w40{width:40px}.w59{width:59px}.w55{width:54.500px}.w53{width:53px}.w57{width:57.500px}
.mdibtns{margin-left:auto;display:flex;gap:2px;margin-right:-1px;margin-top:4px}
.raised{display:flex;width:14px;height:14px;align-items:center;justify-content:center;background:#f0f0f0;border:1px solid;border-color:#fff #696969 #696969 #fff;box-shadow:inset -1px -1px #a0a0a0;flex:none}
.raised svg{width:12px;height:12px}
.up{font-size:6px;color:#999}

.bar{height:27px;border-top:1px solid #a0a0a0;display:flex;flex:none;background:#f0f0f0}
.bar+.bar{height:28px}
.seg{display:flex;align-items:center;height:26px;border-top:1px solid #fff;border-left:1px solid #fff;border-right:1px solid #a0a0a0;flex:none;padding-bottom:1px}
.c{width:22px;height:22px;display:flex;align-items:center;justify-content:center;flex:none}
.c svg{width:16px;height:16px;overflow:visible}
.c.on{border:1px solid;border-color:#a0a0a0 #fff #fff #a0a0a0;background:#f7f7f7}
.sep{width:8px;height:20px;flex:none;background:linear-gradient(90deg,transparent 3px,#a0a0a0 3px,#a0a0a0 4px,#fff 4px,#fff 5px,transparent 5px)}
.sep.wide{width:9px}
.s1{width:280px;padding-left:10px}
.s2{margin-left:97px;padding-left:10px;border-right:0}
.arr{width:12px;display:flex;justify-content:center}
.arr svg{width:8px;height:8px}
.arr.n{width:9px}
.combo{width:134px;height:21px;background:#e1e1e1;border:1px solid #adadad;display:flex;align-items:center;justify-content:space-between;padding:0 4px 0 3px;white-space:nowrap;margin-left:1px}
.combo svg{width:10px;height:6px}
.q{font:bold 18px/22px "DejaVu Sans",sans-serif;color:#00007c}
.s3{width:86px;margin-left:auto;padding-left:12px}
.sw{width:67px;height:16px}
.r1{width:470px;padding-left:10px}
.r1 .sep{width:9px}
.misc{font:7px "DejaVu Sans",sans-serif;letter-spacing:0}
.r2{width:234px;margin-left:42px;padding-left:10px}
.r3{width:124px;margin-left:auto;padding-left:10px}

.work{height:554px;display:flex;border-top:1px solid #696969;flex:none}
.toolbox{width:197px;padding:3px 0 0 3px;display:flex;flex-direction:column;border-right:4px double #a0a0a0;height:553px;border-bottom:1px solid #a0a0a0}
.tbhead{display:flex;height:18px;gap:4px;flex:none}
.tbhead span{width:151px;padding:1px 0 0 3px;background:linear-gradient(90deg,#bdccdb,#d7e4f2);letter-spacing:-.05px}
.tbhead b{margin-top:2px}
.tbhead b:last-child{margin-left:-1px}
.tbicons{height:27px;display:flex;align-items:center;gap:10px;padding-left:7px;margin-top:3px;border-top:1px solid #fff;border-left:1px solid #fff;width:185px;flex:none;padding-top:1px}
.tbicons svg{width:16px;height:16px}
.te{font:10px "Noto Sans",sans-serif;fill:#999}
.te.e{fill:#fff}
.tbicons .last{margin-left:20px}
.tree{width:180px;height:475px;margin-left:2px;background:#fff;border:1px solid #828790;border-right:1px solid #828790;box-shadow:1px 1px #fff,2px 2px #808080;padding:1px 0 0 8px;flex:none}
.trow{display:flex;height:18px;align-items:center}
.trow .conn{width:26px;height:16px;margin-right:-9px}
.clip{width:12px;height:14px}
.trow span{margin-left:7px;letter-spacing:-.2px}
.trow.two{padding-left:23px}
.elbow{width:11px;height:16px}
.trow .sel{background:#f0f0f0;margin-left:3px;padding:0 2px;height:18px;line-height:18px}
.tabs{display:flex;letter-spacing:-.3px;white-space:nowrap;font-size:11.300px}
.tab{height:19px;line-height:17px;border:solid #696969;border-width:1px 2px 2px 1px;border-radius:0 0 3px 3px;text-align:center;border-left-color:#fff;flex:none}
.tab.act{border-top-color:#f0f0f0;height:22px;line-height:22px}
.t1{padding-left:2px}
.t1 .tab:nth-child(n+2){height:20px;line-height:20px}
.t1 .tab:nth-child(1){width:59px}.t1 .tab:nth-child(2){width:48px;margin-right:2px}.t1 .tab:nth-child(3){width:70px}

.mdi{width:1143px;padding:2px 0 0 5px;display:flex;flex-direction:column;border-left:1px solid #696969;border-top:1px solid #fff}
.view{display:flex;height:503px;border-top:2px solid #696969;border-left:2px solid #808080;flex:none;border-right:1px solid #fff;width:1135px}
.sheet{width:1113px;height:501px;background:#fff}
.vscroll{width:16px;background:#f0f0f0}
.vscroll i{display:block;height:176px;background:#cdcdcd}
.hscroll{height:18px;width:1134px;border-left:2px solid #808080;display:flex;border-bottom:2px solid #fff;flex:none}
.hscroll svg{width:16px;height:16px}
.hscroll i{width:505px;height:15px;background:#cdcdcd}
.mditabs{border-top:1px solid #696969;margin-top:5px;flex:1}
.doctab{margin-top:-1px;width:73px;height:24px;border:solid #000;border-width:0 2px 2px 1px;background:#f0f0f0;border-radius:0 0 3px 3px;display:flex;align-items:center;padding-left:1px;gap:4px;letter-spacing:-.45px}
.r{fill:none;stroke:#f00;stroke-width:1}
.node{fill:#f00}
.lb{font:bold 9.500px "Liberation Sans",sans-serif;letter-spacing:0}
.nt{font:10px "Liberation Sans",sans-serif;letter-spacing:0;fill:#222}
.xm{font:8px "Liberation Serif",serif;letter-spacing:0}
.rul{font:7px "Liberation Sans",sans-serif;fill:#666}
.names{font:18.300px "Liberation Sans",sans-serif;letter-spacing:0}
.fig{font:24.500px "Liberation Sans",sans-serif;letter-spacing:0}

.instr{width:26px;border-left:1px solid #696969;border-right:1px solid #a0a0a0;padding:12px 0 0 3px;height:536px;display:flex;flex-direction:column}
.instr i{height:21px;display:flex;align-items:center;flex:none}
.instr svg{width:16px;height:16px}
.instr hr{width:100%;border:0;border-top:1px solid #a0a0a0;margin:2px 0;flex:none}
.instr .tall{height:24px}
.instr .pt{height:9px;font:7px "DejaVu Sans",sans-serif;padding-left:5px}
.instr .dim{color:#999}

.results{height:58px;border-top:1px solid #696969;display:flex;flex:none;margin-top:3px}
.rside{width:24px;padding:4px 0 0 4px;display:flex;flex-direction:column;gap:2px}
.rside span{width:16px;height:17px;margin-left:-2px;background:linear-gradient(90deg,#bdccdb,#d7e4f2);overflow:hidden}
.rside em{display:block;transform:rotate(-90deg);height:16px}
.rmain{flex:1;padding-top:7px}
.rbox{height:24px;margin-right:5px;border:1px solid #fff;border-right:2px solid #696969;border-bottom:1px solid #696969}
.rbox p{margin:0 3px 0 0;border:1px solid #828790;background:#fff;height:19px;padding-left:23px;line-height:21px;overflow:hidden;letter-spacing:-.32px;white-space:nowrap}
.t2{padding-left:1px}
.t2 .tab{margin-right:2px}
.t2 .tab:nth-child(1){width:47px;margin-right:0;height:21px;line-height:21px}.t2 .tab:nth-child(2){width:41px;padding-right:8px}.t2 .tab:nth-child(3){width:70px}.t2 .tab:nth-child(4){width:77px}.t2 .tab:nth-child(5){width:58px}
.status{height:21px;border-top:1px solid #a0a0a0;flex:none;display:flex;padding:4px 4px 0 2px;letter-spacing:0}
.status span:first-child{width:785px;letter-spacing:-.4px}
.status .d1{width:336px}
.cells{margin-left:auto;display:flex;gap:2px}
.cells i{width:6px;height:13px;border:1px solid #a0a0a0;border-right:0;border-bottom:0}

.taskbar{height:30px;background:linear-gradient(90deg,#1d242b,#22343c 18%,#22343c 55%,#161d25);display:flex;flex:none;color:#fff}
.taskbar>i{width:36px;display:flex;align-items:center;justify-content:center;margin-right:.9px}
.taskbar>i svg{width:17px;height:17px}
.taskbar .run{background:linear-gradient(#8fb3a2,#8fb3a2) center bottom/28px 2px no-repeat}
.taskbar .run.active{background:#4e5a61;box-shadow:inset 0 -2px #a6c9b6;width:37px}
.tray{margin-left:auto;display:flex;align-items:center;padding-right:24px}
.ic1{width:96px;height:18px}
.tray span{margin:0 22px 0 14px}
.note{width:17px;height:17px}

.mm{position:absolute;width:180px;height:168px;background:#f0f0f0;border:1px solid #a8a8a8;box-shadow:0 3px 9px 1px rgba(0,0,0,.32);display:flex;flex-direction:column}
.m1{left:168px;top:114px}.m2{left:175px;top:407px}.m3{left:1162px;top:102px}.m4{left:1161px;top:488px}
.mt{height:31px;background:#fff;color:#999;display:flex;justify-content:space-between;padding:7px 10px 0 8px;letter-spacing:0;flex:none}
.mt svg{width:10px;height:10px;margin-top:2px}
.lcd{height:31px;border:solid;border-color:#ddd #696969 #696969 #f0f0f0;border-width:1px 2px 2px 1px;padding:2px;flex:none}
.lcd div{height:24px;background:#000;border:1px solid #777;color:#fff;text-align:center;font-size:15.500px;line-height:22px}
.g1{width:166px;height:28px;margin:8px 0 0 6px;border:1px solid #dcdcdc;display:flex;align-items:center;padding-left:12px;flex:none}
.mm b{font-weight:400;background:#e1e1e1;border:1px solid #adadad;display:flex;align-items:center;justify-content:center;flex:none}
.mm b.sel{background:#cce4f7;border-color:#00559b}
.g1 b{width:28px;height:20px;margin-right:9.300px;font-size:11px;letter-spacing:0}
.g2{width:114px;height:25px;margin-left:31px;border:1px solid #dcdcdc;border-top:0;display:flex;padding:6px 0 0 9px;gap:12px;flex:none}
.g2 b{width:42px;height:14px}
.g2 b.dc{width:40px}
.g2 svg{width:22px;height:9px}
.g2 hr{width:22px;border:0;border-top:2px solid #000;margin:0}
.g3{display:flex;padding:12px 7px 0 6px;justify-content:space-between}
.g3 b{width:70px;height:17px;letter-spacing:0}
.tm{width:14px;display:flex;flex-direction:column;align-items:center;margin-top:-3px}
.tm span{height:10px;line-height:10px;font-size:13px;margin-left:1px}
.tm i{width:13px;height:13px;margin-top:2px;border-radius:50%;border:1px solid #ccc;background:radial-gradient(circle,#c8c8c8 0 3px,#fff 3.800px)}
.tm.neg{margin-top:0}
.tm.neg span{height:8px;line-height:8px;margin-left:5px}
.grip{position:absolute;right:1px;bottom:1px;width:10px;height:10px}
```
